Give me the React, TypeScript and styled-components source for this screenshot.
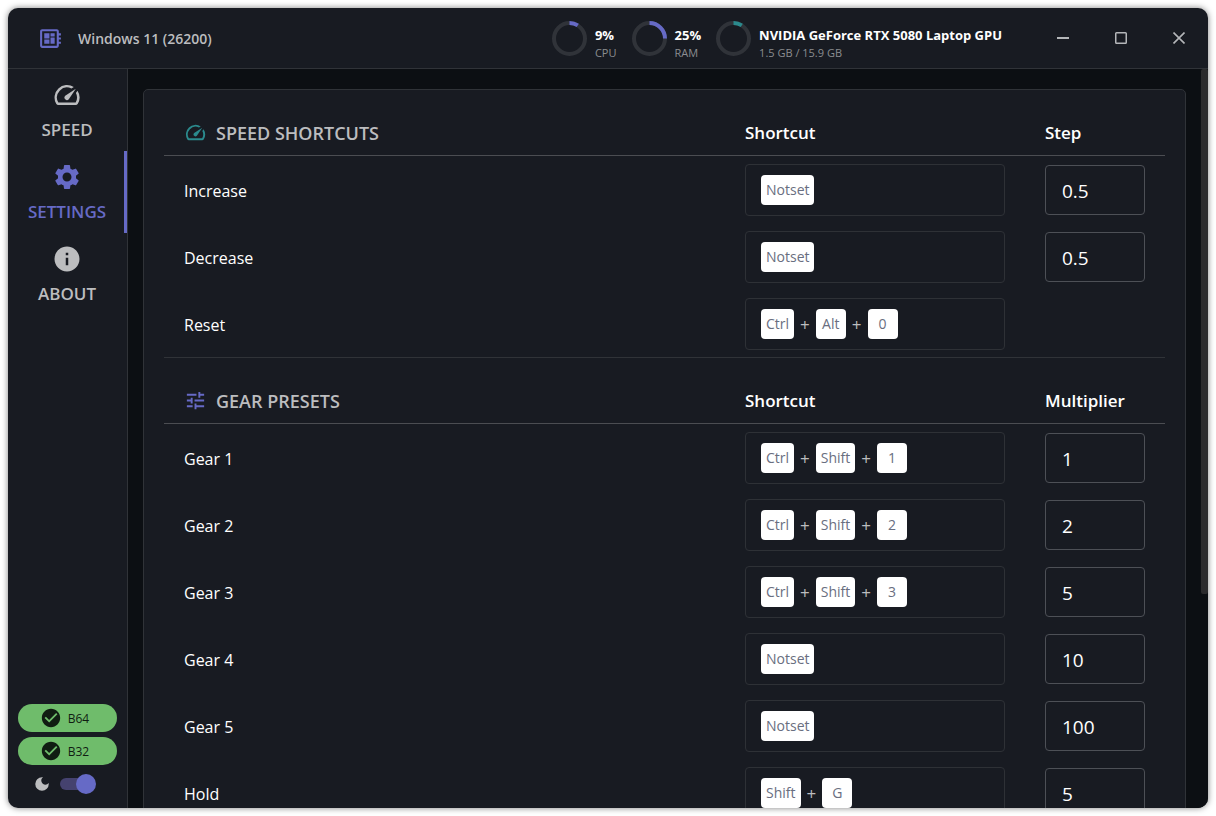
import React, { useState } from "react";
import styled, { createGlobalStyle, css } from "styled-components";
import {
  MdCheckCircle,
  MdDarkMode,
  MdDeveloperBoard,
  MdInfo,
  MdSettings,
  MdSpeed,
  MdTune,
} from "react-icons/md";

const color = {
  panel: "#181b22",
  page: "#0c0f13",
  line: "#303338",
  lineStrong: "#4b4d52",
  field: "#2e3136",
  fieldStrong: "#4d5056",
  accent: "#666ac6",
  teal: "#2b8a8d",
  green: "#6fbc6b",
  muted: "#bcbdbf",
  dim: "#8b8d90",
  text: "#ffffff",
};

const GlobalStyle = createGlobalStyle`
  *, *::before, *::after { box-sizing: border-box; }
  body {
    margin: 0;
    background: #ffffff;
    color: ${color.text};
    font-family: "Segoe UI", "Open Sans", "Noto Sans", sans-serif;
    font-size: 17px;
  }
  button, input { font-family: inherit; }
`;

const Screen = styled.div`
  height: 100vh;
  padding: 8px;
`;

const AppWindow = styled.div`
  display: flex;
  flex-direction: column;
  height: 100%;
  overflow: hidden;
  border-radius: 10px;
  background: ${color.panel};
  box-shadow: 0 0 6px rgba(0, 0, 0, 0.5);
`;

const TitleBar = styled.header`
  display: flex;
  flex: none;
  align-items: center;
  height: 61px;
  padding-left: 30px;
  border-bottom: 1px solid ${color.line};
`;

const SystemName = styled.div`
  display: flex;
  align-items: center;
  gap: 15px;
  color: ${color.muted};
  font-size: 14px;
  font-weight: 600;

  svg {
    color: ${color.accent};
  }
`;

const Stats = styled.div`
  display: flex;
  gap: 15px;
  margin-left: auto;
  margin-right: 32px;
`;

const Stat = styled.div`
  display: flex;
  align-items: center;
  gap: 8px;
`;

const StatText = styled.div`
  display: flex;
  flex-direction: column;
  padding-top: 12px;
  white-space: nowrap;
`;

const StatValue = styled.span`
  font-size: 13px;
  line-height: 18px;
  font-weight: 700;
`;

const StatLabel = styled.span`
  color: ${color.dim};
  font-size: 11px;
  line-height: 18px;
`;

const Controls = styled.div`
  display: flex;
  align-self: stretch;
`;

const ControlButton = styled.button`
  display: flex;
  align-items: center;
  justify-content: center;
  width: 58px;
  padding: 0;
  border: 0;
  background: none;
  color: #b4b6b9;
`;

const Body = styled.div`
  display: flex;
  flex: 1;
  min-height: 0;
`;

const Sidebar = styled.aside`
  display: flex;
  flex: none;
  flex-direction: column;
  justify-content: space-between;
  width: 120px;
  border-right: 1px solid ${color.line};
`;

const Nav = styled.nav`
  display: flex;
  flex-direction: column;
`;

const NavLink = styled.a<{ $active?: boolean }>`
  display: flex;
  flex-direction: column;
  align-items: center;
  gap: 8px;
  height: 82px;
  padding: 11px 0 0 2px;
  border-right: 3px solid transparent;
  color: ${color.muted};
  font-size: 17px;
  line-height: 24px;
  font-weight: 600;
  text-decoration: none;

  ${(p) =>
    p.$active &&
    css`
      border-color: ${color.accent};
      color: ${color.accent};
    `}
`;

const SidebarFoot = styled.div`
  display: flex;
  flex-direction: column;
  gap: 5px;
  padding: 0 10px 12px;
`;

const BridgeButton = styled.button`
  display: flex;
  align-items: center;
  justify-content: center;
  gap: 6px;
  height: 28px;
  padding: 0 6px 0 0;
  border: 0;
  border-radius: 14px;
  background: ${color.green};
  color: #101c12;
  font-size: 12px;
`;

const ThemeToggle = styled.label`
  display: flex;
  align-items: center;
  justify-content: center;
  gap: 9px;
  height: 24px;
  margin-top: 2px;
  padding-right: 8px;
  color: ${color.muted};
`;

const Switch = styled.input`
  appearance: none;
  display: flex;
  align-items: center;
  width: 34px;
  height: 12px;
  margin: 0;
  border-radius: 6px;
  background: #45426f;

  &::before {
    content: "";
    width: 20px;
    height: 20px;
    border-radius: 50%;
    background: #9a9ca0;
  }

  &:checked {
    justify-content: flex-end;
  }

  &:checked::before {
    margin-right: -2px;
    background: ${color.accent};
  }
`;

const Content = styled.main`
  flex: 1;
  min-width: 0;
  padding: 20px 15px;
  overflow-y: auto;
  scrollbar-width: none;
  background: ${color.page};
`;

const ScrollTrack = styled.div`
  flex: none;
  width: 7px;
  background: ${color.page};
`;

const ScrollThumb = styled.div`
  height: 71%;
  border-radius: 2px;
  background: #2b2b2d;
`;

const Card = styled.div`
  padding: 20px;
  border: 1px solid ${color.line};
  border-radius: 5px;
  background: ${color.panel};
`;

const Section = styled.section`
  & + & {
    padding-top: 20px;
    border-top: 1px solid ${color.line};
  }
`;

const Table = styled.table`
  width: 100%;
  table-layout: fixed;
  border-spacing: 0;
`;

const HeadCell = styled.th<{ $width?: number }>`
  width: ${(p) => (p.$width ? `${p.$width}px` : "auto")};
  height: 46px;
  padding: 0 20px;
  border-bottom: 1px solid ${color.lineStrong};
  font-size: 17px;
  font-weight: 600;
  text-align: left;
`;

const SectionTitle = styled.div`
  display: flex;
  align-items: center;
  gap: 9px;
  color: ${color.muted};
  font-size: 18px;
`;

const TitleIcon = styled.span<{ $color: string }>`
  display: flex;
  color: ${(p) => p.$color};
`;

const RowHead = styled.th`
  padding: 2px 20px 0;
  font-size: 16px;
  font-weight: 400;
  text-align: left;
`;

const Cell = styled.td`
  height: 67px;
  padding: 8px 20px 7px;
`;

const ShortcutField = styled.button`
  display: flex;
  align-items: center;
  gap: 6px;
  width: 100%;
  height: 52px;
  padding: 0 15px;
  border: 1px solid ${color.field};
  border-radius: 4px;
  background: none;
  color: ${color.muted};
  font-size: 17px;
`;

const Key = styled.kbd`
  min-width: 30px;
  padding: 0 5px;
  border-radius: 4px;
  background: #ffffff;
  color: #696e80;
  font-family: inherit;
  font-size: 14px;
  line-height: 30px;
  text-align: center;
`;

const NumberField = styled.input`
  display: block;
  width: 100%;
  height: 50px;
  padding: 1px 16px 0;
  border: 1px solid ${color.fieldStrong};
  border-radius: 4px;
  background: none;
  color: ${color.text};
  font-size: 19px;
`;

type RingProps = { percent: number; stroke: string };

function Ring({ percent, stroke }: RingProps) {
  return (
    <svg width="35" height="35" viewBox="0 0 35 35" fill="none" strokeWidth="4" aria-hidden="true">
      <circle cx="17.5" cy="17.5" r="15.5" stroke="#303339" />
      <circle
        cx="17.5"
        cy="17.5"
        r="15.5"
        stroke={stroke}
        pathLength={100}
        strokeDasharray={`${percent} 100`}
        transform="rotate(-90 17.5 17.5)"
      />
    </svg>
  );
}

const stats = [
  { value: "9%", label: "CPU", percent: 9, stroke: color.accent },
  { value: "25%", label: "RAM", percent: 25, stroke: color.accent },
  { value: "NVIDIA GeForce RTX 5080 Laptop GPU", label: "1.5 GB / 15.9 GB", percent: 9, stroke: color.teal },
];

type Binding = { name: string; keys: string[]; amount?: string };

const speedBindings: Binding[] = [
  { name: "Increase", keys: ["Notset"], amount: "0.5" },
  { name: "Decrease", keys: ["Notset"], amount: "0.5" },
  { name: "Reset", keys: ["Ctrl", "Alt", "0"] },
];

const gearBindings: Binding[] = [
  { name: "Gear 1", keys: ["Ctrl", "Shift", "1"], amount: "1" },
  { name: "Gear 2", keys: ["Ctrl", "Shift", "2"], amount: "2" },
  { name: "Gear 3", keys: ["Ctrl", "Shift", "3"], amount: "5" },
  { name: "Gear 4", keys: ["Notset"], amount: "10" },
  { name: "Gear 5", keys: ["Notset"], amount: "100" },
  { name: "Hold", keys: ["Shift", "G"], amount: "5" },
];

type BindingTableProps = {
  title: string;
  icon: React.ReactNode;
  iconColor: string;
  amountLabel: string;
  bindings: Binding[];
};

function BindingTable({ title, icon, iconColor, amountLabel, bindings }: BindingTableProps) {
  return (
    <Section>
      <Table>
        <thead>
          <tr>
            <HeadCell scope="col">
              <SectionTitle>
                <TitleIcon $color={iconColor}>{icon}</TitleIcon>
                {title}
              </SectionTitle>
            </HeadCell>
            <HeadCell scope="col" $width={300}>Shortcut</HeadCell>
            <HeadCell scope="col" $width={140}>{amountLabel}</HeadCell>
          </tr>
        </thead>
        <tbody>
          {bindings.map((b) => (
            <tr key={b.name}>
              <RowHead scope="row">{b.name}</RowHead>
              <Cell>
                <ShortcutField type="button">
                  {b.keys.map((k, i) => (
                    <React.Fragment key={k}>
                      {i > 0 && <span>+</span>}
                      <Key>{k}</Key>
                    </React.Fragment>
                  ))}
                </ShortcutField>
              </Cell>
              <Cell>
                {b.amount && (
                  <NumberField
                    type="text"
                    inputMode="decimal"
                    aria-label={`${b.name} ${amountLabel}`}
                    defaultValue={b.amount}
                  />
                )}
              </Cell>
            </tr>
          ))}
        </tbody>
      </Table>
    </Section>
  );
}

export default function App() {
  const [dark, setDark] = useState(true);

  return (
    <Screen>
      <GlobalStyle />
      <AppWindow>
        <TitleBar>
          <SystemName>
            <MdDeveloperBoard size={25} />
            Windows 11 (26200)
          </SystemName>
          <Stats>
            {stats.map((s) => (
              <Stat key={s.label}>
                <Ring percent={s.percent} stroke={s.stroke} />
                <StatText>
                  <StatValue>{s.value}</StatValue>
                  <StatLabel>{s.label}</StatLabel>
                </StatText>
              </Stat>
            ))}
          </Stats>
          <Controls>
            <ControlButton type="button" aria-label="Minimize">
              <svg width="12" height="12" viewBox="0 0 12 12" stroke="currentColor" strokeWidth="2">
                <path d="M0 6h12" />
              </svg>
            </ControlButton>
            <ControlButton type="button" aria-label="Maximize">
              <svg width="12" height="12" viewBox="0 0 12 12" fill="none" stroke="currentColor" strokeWidth="1.5">
                <rect x="0.75" y="0.75" width="10.5" height="10.5" rx="0.8" />
              </svg>
            </ControlButton>
            <ControlButton type="button" aria-label="Close">
              <svg width="12" height="12" viewBox="0 0 12 12" stroke="currentColor" strokeWidth="1.6">
                <path d="M0.5 0.5l11 11M11.5 0.5l-11 11" />
              </svg>
            </ControlButton>
          </Controls>
        </TitleBar>
        <Body>
          <Sidebar>
            <Nav>
              <NavLink href="#speed">
                <MdSpeed size={30} />
                SPEED
              </NavLink>
              <NavLink href="#settings" $active aria-current="page">
                <MdSettings size={30} />
                SETTINGS
              </NavLink>
              <NavLink href="#about">
                <MdInfo size={30} />
                ABOUT
              </NavLink>
            </Nav>
            <SidebarFoot>
              <BridgeButton type="button">
                <MdCheckCircle size={22} />
                B64
              </BridgeButton>
              <BridgeButton type="button">
                <MdCheckCircle size={22} />
                B32
              </BridgeButton>
              <ThemeToggle>
                <MdDarkMode size={18} />
                <Switch
                  type="checkbox"
                  role="switch"
                  aria-label="Dark theme"
                  checked={dark}
                  onChange={(e) => setDark(e.target.checked)}
                />
              </ThemeToggle>
            </SidebarFoot>
          </Sidebar>
          <Content>
            <Card>
              <BindingTable
                title="SPEED SHORTCUTS"
                icon={<MdSpeed size={23} />}
                iconColor={color.teal}
                amountLabel="Step"
                bindings={speedBindings}
              />
              <BindingTable
                title="GEAR PRESETS"
                icon={<MdTune size={23} />}
                iconColor={color.accent}
                amountLabel="Multiplier"
                bindings={gearBindings}
              />
            </Card>
          </Content>
          <ScrollTrack>
            <ScrollThumb />
          </ScrollTrack>
        </Body>
      </AppWindow>
    </Screen>
  );
}
